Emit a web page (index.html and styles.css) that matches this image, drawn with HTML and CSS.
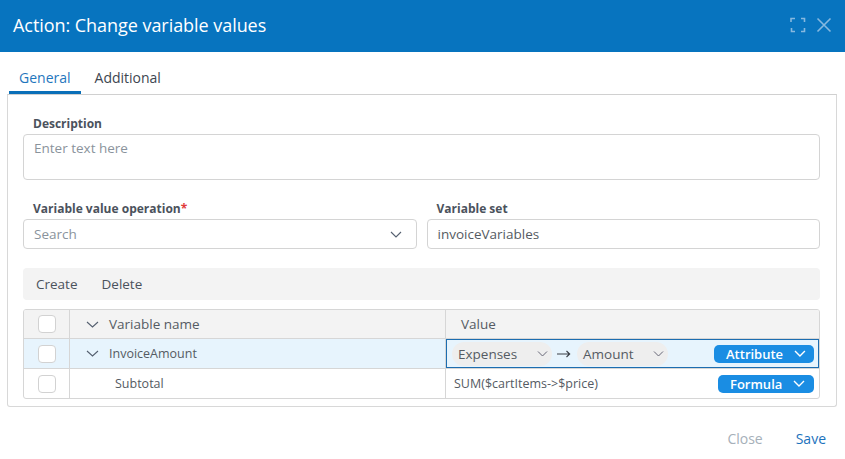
FILE: index.html
```html
<!DOCTYPE html>
<html>
<head>
<meta charset="utf-8">
<link rel="stylesheet" href="styles.css">
</head>
<body>
<div class="dialog">
  <header class="header">
    <h1 class="title">Action: Change variable values</h1>
    <div class="hicons">
      <svg class="hicon" width="16" height="16" viewBox="0 0 16 16"><path d="M1 5V1.5h4M11 1.5h3.5V5M14.5 11v3.5H11M5 14.5H1.5V11" fill="none" stroke="currentColor" stroke-width="1.6"/></svg>
      <svg class="hicon" width="16" height="16" viewBox="0 0 16 16"><path d="M1.5 1.5l13 13M14.5 1.5l-13 13" fill="none" stroke="currentColor" stroke-width="1.6"/></svg>
    </div>
  </header>
  <nav class="tabs">
    <div class="tab active">General</div>
    <div class="tab">Additional</div>
  </nav>
  <section class="panel">
    <div class="field">
      <label class="label">Description</label>
      <div class="textarea">Enter text here</div>
    </div>
    <div class="row2">
      <div class="field">
        <label class="label">Variable value operation<span class="req">*</span></label>
        <div class="input select"><span class="ph">Search</span>
          <svg class="chev" width="12" height="7" viewBox="0 0 12 7"><path d="M1 1l5 5 5-5" fill="none" stroke="#556070" stroke-width="1.1"/></svg>
        </div>
      </div>
      <div class="field">
        <label class="label">Variable set</label>
        <div class="input">invoiceVariables</div>
      </div>
    </div>
    <div class="toolbar">
      <span class="tbtn">Create</span>
      <span class="tbtn">Delete</span>
    </div>
    <div class="table">
      <div class="tr thead">
        <div class="td cb"><span class="box"></span></div>
        <div class="td name"><svg class="chev" width="13" height="7" viewBox="0 0 13 7"><path d="M1 1l5.5 5 5.5-5" fill="none" stroke="#556070" stroke-width="1.1"/></svg><span class="hname">Variable name</span></div>
        <div class="td val"><span class="hval">Value</span></div>
      </div>
      <div class="tr sel">
        <div class="td cb"><span class="box"></span></div>
        <div class="td name"><svg class="chev" width="13" height="7" viewBox="0 0 13 7"><path d="M1 1l5.5 5 5.5-5" fill="none" stroke="#556070" stroke-width="1.1"/></svg><span class="rname">InvoiceAmount</span></div>
        <div class="td val focus">
          <span class="chip chip1">Expenses<svg width="11" height="6" viewBox="0 0 11 6"><path d="M1 .5l4.5 4.5 4.5-4.5" fill="none" stroke="#667" stroke-width="1"/></svg></span>
          <svg class="arrow" width="14" height="8" viewBox="0 0 14 8"><path d="M0 4h12.5M9.5 1l3.2 3-3.2 3" fill="none" stroke="#3a3f46" stroke-width="1.1"/></svg>
          <span class="chip chip2">Amount<svg width="11" height="6" viewBox="0 0 11 6"><path d="M1 .5l4.5 4.5 4.5-4.5" fill="none" stroke="#667" stroke-width="1"/></svg></span>
          <span class="pill pill1">Attribute<svg width="12" height="7" viewBox="0 0 12 7"><path d="M1 1l5 5 5-5" fill="none" stroke="#fff" stroke-width="1.4"/></svg></span>
        </div>
      </div>
      <div class="tr last">
        <div class="td cb"><span class="box"></span></div>
        <div class="td name"><span class="sub">Subtotal</span></div>
        <div class="td val"><span class="formula">SUM($cartItems-&gt;$price)</span>
          <span class="pill pill2">Formula<svg width="12" height="7" viewBox="0 0 12 7"><path d="M1 1l5 5 5-5" fill="none" stroke="#fff" stroke-width="1.4"/></svg></span>
        </div>
      </div>
    </div>
  </section>
  <footer class="footer">
    <span class="fbtn close">Close</span>
    <span class="fbtn save">Save</span>
  </footer>
</div>
</body>
</html>
```
FILE: styles.css
```css
* { box-sizing: border-box; }
html, body { margin: 0; padding: 0; background: #fff; }
body { font-family: "Open Sans", "Liberation Sans", sans-serif; color: #555b63; width: 845px; height: 459px; overflow: hidden; }

.header { height: 52px; background: #0774bf; display: flex; align-items: center; justify-content: space-between; padding: 0 13px 0 13px; }
.title { margin: 0; font-weight: 400; font-size: 18px; color: #fff; letter-spacing: -0.05px; position: relative; top: -1px; }
.hicons { display: flex; gap: 10px; color: #86b8df; position: relative; top: -1px; }
.hicon { display: block; }

.tabs { display: flex; height: 42px; padding-left: 9px; align-items: flex-end; gap: 4px; }
.tab { font-size: 14px; height: 100%; display: flex; align-items: center; padding: 11px 10px 0; color: #3d4650; border-bottom: 3px solid transparent; }
.tab.active { color: #1f76bd; border-bottom-color: #0a6fb8; }

.panel { margin: 0 8px 0 7px; border: 1px solid #d8d8d8; border-top-color: #d0d0d0; border-radius: 0 0 3px 3px; padding: 21px 16px 7px 15px; }
.field { display: flex; flex-direction: column; }
.label { font-size: 12px; font-weight: 700; color: #4b525c; line-height: 16px; padding-left: 10px; margin-bottom: 2px; }
.req { color: #e03b3b; }
.textarea { height: 46px; border: 1px solid #d4d4d4; border-radius: 4px; padding: 4px 10px; font-size: 13.5px; color: #8a939c; line-height: 18px; }
.row2 { display: grid; grid-template-columns: 1fr 1fr; gap: 10px; margin-top: 21px; }
.input { height: 30px; border: 1px solid #d4d4d4; border-radius: 4px; padding: 0 10px; font-size: 13.5px; display: flex; align-items: center; color: #555b63; }
.select { justify-content: space-between; }
.ph { color: #8a939c; }
.select .chev { margin-right: 4px; }

.toolbar { margin-top: 19px; height: 32px; background: #f3f3f3; border-radius: 4px; display: flex; align-items: center; padding-left: 13px; gap: 24px; font-size: 13.5px; color: #4b525c; }

.table { margin-top: 9px; border: 1px solid #d6d6d6; border-radius: 3px; font-size: 13px; overflow: hidden; }
.tr { display: grid; grid-template-columns: 46px 376px 1fr; height: 30px; border-bottom: 1px solid #d6d6d6; }
.tr.last { border-bottom: 0; height: 29px; }
.thead { background: #f3f3f3; height: 29px; }
.sel { background: #e7f4fd; }
.td { display: flex; align-items: center; border-right: 1px solid #d6d6d6; min-width: 0; }
.td.val { border-right: 0; padding: 0 5px 0 10px; }
.cb { justify-content: center; padding-left: 1px; }
.box { width: 18px; height: 18px; border: 1px solid #d2d2d2; border-radius: 4px; background: #fff; }
.name { padding-left: 16px; }
.name .chev { margin-right: 10px; }
.hname { font-size: 13.5px; color: #555b63; }
.hval { font-size: 13.5px; padding-left: 5px; color: #555b63; }
.rname { font-size: 12.5px; color: #555b63; }
.sub { font-size: 12.5px; padding-left: 29px; color: #555b63; }
.focus { box-shadow: inset 0 0 0 1px #1c6db0; }
.chip { height: 24px; background: #eeeeee; border-radius: 12px; display: inline-flex; align-items: center; justify-content: space-between; padding: 0 4px 0 6px; font-size: 13.5px; color: #555b63; }
.chip1 { width: 100px; margin-left: -4px; }
.chip2 { width: 91px; }
.arrow { margin: 0 6px 0 5px; display: block; }
.pill { margin-left: auto; height: 18px; background: #1a8de3; color: #fff; border-radius: 5px; display: inline-flex; align-items: center; gap: 11px; padding: 0 8px 0 12px; font-size: 13px; font-weight: 600; }
.pill1 { width: 100px; }
.pill2 { width: 96px; padding-left: 12px; }
.formula { font-size: 12.5px; color: #555b63; margin-left: -2px; }

.footer { display: flex; justify-content: flex-end; gap: 33px; padding: 22px 19px 0 0; font-size: 14px; }
.close { color: #a6b0b9; }
.save { color: #1c72bd; }
```
